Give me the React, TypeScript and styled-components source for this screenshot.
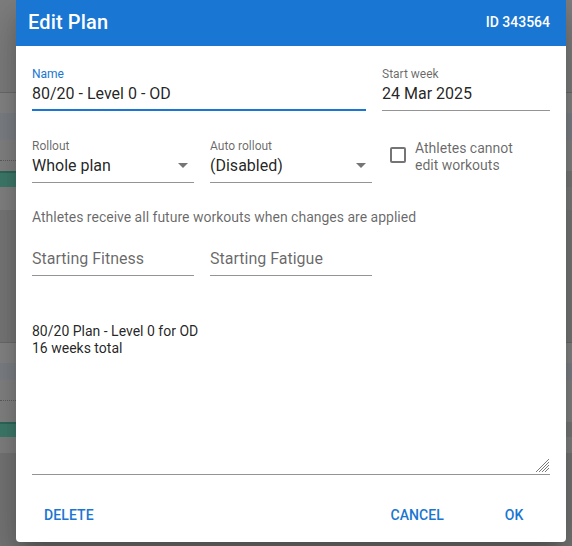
import React from "react";
import styled, { createGlobalStyle, css } from "styled-components";

const PRIMARY = "#1976d2";
const TEXT = "rgba(0, 0, 0, 0.87)";
const MUTED = "rgba(0, 0, 0, 0.6)";
const LINE = "rgba(0, 0, 0, 0.42)";

const GlobalStyle = createGlobalStyle`
  html, body {
    margin: 0;
    padding: 0;
    width: 572px;
    height: 546px;
    overflow: hidden;
    font-family: Roboto, "Liberation Sans", sans-serif;
  }
`;

// rows of the page behind the dialog, already dimmed by the scrim.
// accent = colour of the left-hand cell (calendar bars), dotted = dotted rule in that cell
type BandDef = { h: number; c: string; accent?: string; dotted?: boolean };

const bands: BandDef[] = [
  { h: 92, c: "#7f7f7f" },
  { h: 1, c: "#6d6d6d" },
  { h: 20, c: "#878787" },
  { h: 27, c: "#7f8388" },
  { h: 31, c: "#858585", dotted: true },
  { h: 2, c: "#7b7b7b", accent: "#2f6a5c" },
  { h: 14, c: "#7b7b7b", accent: "#3f7d6d" },
  { h: 23, c: "#7e7e7e", accent: "#858585" },
  { h: 132, c: "#7a7a7a" },
  { h: 1, c: "#6d6d6d" },
  { h: 20, c: "#878787" },
  { h: 17, c: "#7f8388" },
  { h: 42, c: "#858585", dotted: true },
  { h: 2, c: "#7b7b7b", accent: "#2f6a5c" },
  { h: 13, c: "#7b7b7b", accent: "#3f7d6d" },
  { h: 16, c: "#838383" },
  { h: 93, c: "#777777" },
];

const Page = styled.div`
  position: relative;
  width: 572px;
  height: 546px;
  display: flex;
  flex-direction: column;
  background: #777;
`;

const Band = styled.div<{ $h: number; $c: string }>`
  flex: none;
  display: flex;
  height: ${(p) => p.$h}px;
  background: ${(p) => p.$c};
`;

const BandCell = styled.div<{ $accent?: string; $dotted?: boolean }>`
  width: 40px;
  height: 100%;
  box-sizing: border-box;
  background: ${(p) => p.$accent ?? "transparent"};
  ${(p) =>
    p.$dotted &&
    css`
      padding-top: 20px;
      &::after {
        content: "";
        display: block;
        border-top: 1px dotted #5f5f5f;
      }
    `}
`;

const Dialog = styled.div`
  position: absolute;
  left: 16px;
  top: 0;
  width: 550px;
  height: 542px;
  background: #fff;
  border-radius: 0 0 4px 4px;
  box-shadow: 0 11px 15px -7px rgba(0, 0, 0, 0.2), 0 24px 38px 3px rgba(0, 0, 0, 0.14),
    0 9px 46px 8px rgba(0, 0, 0, 0.12);
  display: flex;
  flex-direction: column;
  overflow: hidden;
`;

const Header = styled.div`
  flex: none;
  height: 46px;
  box-sizing: border-box;
  padding: 0 16px 3px 12px;
  background: ${PRIMARY};
  color: #fff;
  display: flex;
  align-items: center;
  justify-content: space-between;
`;

const Title = styled.h2`
  margin: 0;
  font-size: 20px;
  line-height: 24px;
  font-weight: 500;
  letter-spacing: 0.15px;
`;

const PlanId = styled.span`
  font-size: 14px;
  line-height: 20px;
  font-weight: 500;
`;

const Body = styled.div`
  flex: 1;
  padding: 21px 16px 0;
  display: flex;
  flex-direction: column;
`;

const Row = styled.div<{ $top?: number }>`
  display: flex;
  gap: 16px;
  margin-top: ${(p) => p.$top ?? 0}px;
`;

const Field = styled.div<{ $width: number }>`
  width: ${(p) => p.$width}px;
  flex: none;
  display: flex;
  flex-direction: column;
`;

const Label = styled.label<{ $focused?: boolean }>`
  height: 14px;
  font-size: 12px;
  line-height: 14px;
  color: ${(p) => (p.$focused ? PRIMARY : MUTED)};
  margin-bottom: 3px;
  white-space: nowrap;
`;

const InputRow = styled.div<{ $focused?: boolean; $empty?: boolean }>`
  display: flex;
  align-items: center;
  padding-bottom: ${(p) => (p.$empty ? 7 : p.$focused ? 6 : 7)}px;
  border-bottom: ${(p) => (p.$focused ? `2px solid ${PRIMARY}` : `1px solid ${LINE}`)};
`;

const Value = styled.span<{ $placeholder?: boolean }>`
  flex: 1;
  font-size: 16px;
  line-height: 19px;
  color: ${(p) => (p.$placeholder ? MUTED : TEXT)};
  white-space: nowrap;
`;

const Arrow = styled.span`
  width: 0;
  height: 0;
  margin-right: 6px;
  border-left: 5px solid transparent;
  border-right: 5px solid transparent;
  border-top: 5px solid rgba(0, 0, 0, 0.54);
`;

const CheckField = styled.label`
  flex: none;
  width: 162px;
  display: flex;
  align-items: flex-start;
  gap: 9px;
  padding: 1px 0 0 2px;
  box-sizing: border-box;
`;

const Box = styled.span`
  flex: none;
  width: 16px;
  height: 16px;
  margin-top: 7px;
  box-sizing: border-box;
  border: 2px solid rgba(0, 0, 0, 0.54);
  border-radius: 2px;
`;

const CheckText = styled.span`
  font-size: 14px;
  line-height: 17px;
  color: ${MUTED};
`;

const Helper = styled.p`
  margin: 26px 0 0;
  font-size: 14px;
  line-height: 17px;
  color: ${MUTED};
`;

const NotesWrap = styled.div`
  position: relative;
  margin-top: 47px;
  width: 518px;
`;

const Notes = styled.textarea`
  display: block;
  width: 100%;
  height: 152px;
  box-sizing: border-box;
  padding: 0;
  border: none;
  border-bottom: 1px solid ${LINE};
  outline: none;
  resize: none;
  font-family: Roboto, "Liberation Sans", sans-serif;
  font-size: 14px;
  line-height: 17px;
  color: ${TEXT};
  background: transparent;
`;

const Grip = styled.svg`
  position: absolute;
  right: 1px;
  bottom: 3px;
  pointer-events: none;
`;

const Actions = styled.div`
  flex: none;
  display: flex;
  align-items: center;
  gap: 30px;
  padding: 0 20px 9px;
`;

const Spacer = styled.div`
  flex: 1;
`;

const Button = styled.button`
  min-width: 64px;
  height: 36px;
  padding: 6px 8px;
  border: none;
  background: none;
  color: ${PRIMARY};
  font-family: Roboto, "Liberation Sans", sans-serif;
  font-size: 14px;
  line-height: 24px;
  font-weight: 500;
  letter-spacing: 0.1px;
  text-transform: uppercase;
  cursor: pointer;
`;

interface TextFieldProps {
  label: string;
  value?: string;
  width: number;
  focused?: boolean;
  select?: boolean;
}

const TextField: React.FC<TextFieldProps> = ({ label, value, width, focused, select }) => {
  const empty = !value;
  return (
    <Field $width={width}>
      <Label $focused={focused}>{empty ? "" : label}</Label>
      <InputRow $focused={focused} $empty={empty}>
        <Value $placeholder={empty}>{empty ? label : value}</Value>
        {select && <Arrow />}
      </InputRow>
    </Field>
  );
};

const App: React.FC = () => {
  return (
    <Page>
      <GlobalStyle />
      {bands.map((b, i) => (
        <Band key={i} $h={b.h} $c={b.c}>
          <BandCell $accent={b.accent} $dotted={b.dotted} />
        </Band>
      ))}

      <Dialog>
        <Header>
          <Title>Edit Plan</Title>
          <PlanId>ID 343564</PlanId>
        </Header>

        <Body>
          <Row>
            <TextField label="Name" value="80/20 - Level 0 - OD" width={334} focused />
            <TextField label="Start week" value="24 Mar 2025" width={168} />
          </Row>

          <Row $top={28}>
            <TextField label="Rollout" value="Whole plan" width={162} select />
            <TextField label="Auto rollout" value="(Disabled)" width={162} select />
            <CheckField>
              <Box />
              <CheckText>
                Athletes cannot
                <br />
                edit workouts
              </CheckText>
            </CheckField>
          </Row>

          <Helper>Athletes receive all future workouts when changes are applied</Helper>

          <Row $top={6}>
            <TextField label="Starting Fitness" width={162} />
            <TextField label="Starting Fatigue" width={162} />
          </Row>

          <NotesWrap>
            <Notes readOnly defaultValue={"80/20 Plan - Level 0 for OD\n16 weeks total"} />
            <Grip width="13" height="13" viewBox="0 0 13 13">
              <g stroke="#7a7a7a" strokeWidth="1">
                <line x1="0" y1="13" x2="13" y2="0" />
                <line x1="3" y1="13" x2="13" y2="3" />
                <line x1="6" y1="13" x2="13" y2="6" />
                <line x1="9" y1="13" x2="13" y2="9" />
              </g>
            </Grip>
          </NotesWrap>
        </Body>

        <Actions>
          <Button>Delete</Button>
          <Spacer />
          <Button>Cancel</Button>
          <Button>OK</Button>
        </Actions>
      </Dialog>
    </Page>
  );
};

export default App;
